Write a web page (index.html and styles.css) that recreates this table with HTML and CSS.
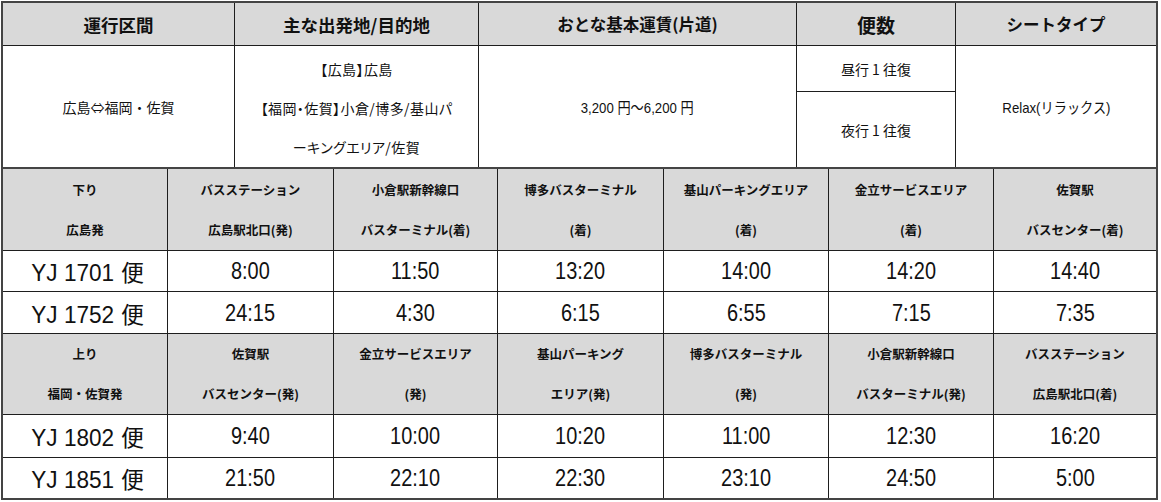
FILE: index.html
```html
<!DOCTYPE html>
<html lang="ja">
<head>
<meta charset="utf-8">
<title>広島⇔福岡・佐賀 運行情報</title>
<link rel="stylesheet" href="styles.css">
</head>
<body>
<div class="page">
  <table class="summary">
    <colgroup>
      <col class="c1"><col class="c2"><col class="c3"><col class="c4"><col class="c5">
    </colgroup>
    <tr class="head">
      <th>運行区間</th>
      <th>主な出発地/目的地</th>
      <th class="narrow">おとな基本運賃(片道)</th>
      <th class="big">便数</th>
      <th class="narrow">シートタイプ</th>
    </tr>
    <tr class="r2a">
      <td rowspan="2" class="desc">広島⇔福岡・佐賀</td>
      <td rowspan="2" class="desc multi">【広島】広島<br>【福岡・佐賀】小倉/博多/基山パ<br>ーキングエリア/佐賀</td>
      <td rowspan="2" class="desc cond"><span class="sq">3,200 円～6,200 円</span></td>
      <td class="desc">昼行 1 往復</td>
      <td rowspan="2" class="desc cond"><span class="sq">Relax(リラックス)</span></td>
    </tr>
    <tr class="r2b">
      <td class="desc night">夜行 1 往復</td>
    </tr>
  </table>

  <table class="timetable">
    <colgroup>
      <col class="t1"><col class="t2"><col class="t3"><col class="t4"><col class="t5"><col class="t6"><col class="t7">
    </colgroup>
    <tr class="sub sub1">
      <th>下り<br>広島発</th>
      <th>バスステーション<br>広島駅北口(発)</th>
      <th>小倉駅新幹線口<br>バスターミナル(着)</th>
      <th>博多バスターミナル<br>(着)</th>
      <th>基山パーキングエリア<br>(着)</th>
      <th>金立サービスエリア<br>(着)</th>
      <th>佐賀駅<br>バスセンター(着)</th>
    </tr>
    <tr class="row ra">
      <td class="bin"><span class="yj">YJ 1701</span> <span class="kanji">便</span></td>
      <td><span class="n">8:00</span></td><td><span class="n">11:50</span></td><td><span class="n">13:20</span></td><td><span class="n">14:00</span></td><td><span class="n">14:20</span></td><td><span class="n">14:40</span></td>
    </tr>
    <tr class="row rb">
      <td class="bin"><span class="yj">YJ 1752</span> <span class="kanji">便</span></td>
      <td><span class="n">24:15</span></td><td><span class="n">4:30</span></td><td><span class="n">6:15</span></td><td><span class="n">6:55</span></td><td><span class="n">7:15</span></td><td><span class="n">7:35</span></td>
    </tr>
    <tr class="sub sub2">
      <th>上り<br>福岡・佐賀発</th>
      <th>佐賀駅<br>バスセンター(発)</th>
      <th>金立サービスエリア<br>(発)</th>
      <th>基山パーキング<br>エリア(発)</th>
      <th>博多バスターミナル<br>(発)</th>
      <th>小倉駅新幹線口<br>バスターミナル(発)</th>
      <th>バスステーション<br>広島駅北口(着)</th>
    </tr>
    <tr class="row rc">
      <td class="bin"><span class="yj">YJ 1802</span> <span class="kanji">便</span></td>
      <td><span class="n">9:40</span></td><td><span class="n">10:00</span></td><td><span class="n">10:20</span></td><td><span class="n">11:00</span></td><td><span class="n">12:30</span></td><td><span class="n">16:20</span></td>
    </tr>
    <tr class="row rd">
      <td class="bin"><span class="yj">YJ 1851</span> <span class="kanji">便</span></td>
      <td><span class="n">21:50</span></td><td><span class="n">22:10</span></td><td><span class="n">22:30</span></td><td><span class="n">23:10</span></td><td><span class="n">24:50</span></td><td><span class="n">5:00</span></td>
    </tr>
  </table>
</div>
</body>
</html>
```

FILE: styles.css
```css
* { box-sizing: border-box; }

html, body {
  margin: 0;
  padding: 0;
  background: #ffffff;
}

body {
  font-family: "Noto Sans CJK JP", "Liberation Sans", sans-serif;
  color: #111111;
}

.page {
  padding: 1px 0 0 1px;
  width: 1161px;
}

table {
  border-collapse: separate;
  border-spacing: 0;
  table-layout: fixed;
  width: 1157px;
}

th, td {
  padding: 0;
  text-align: center;
  vertical-align: middle;
  border-right: 1px solid #1e1e1e;
  border-bottom: 1px solid #1e1e1e;
}

tr > :last-child { border-right: none; }

/* ---------- summary table ---------- */
.summary {
  border: 2px solid #444444;
}

.summary .c1 { width: 232px; }
.summary .c2 { width: 244px; }
.summary .c3 { width: 318px; }
.summary .c4 { width: 159px; }
.summary .c5 { width: 200px; }

.summary .head th {
  height: 43px;
  background: #d9d9d9;
  font-size: 17.5px;
  font-weight: 700;
}

.summary .head th.narrow {
  font-size: 16.5px;
}

.summary .head th.big {
  font-size: 19px;
}

.summary .r2a td { height: 46px; }
.summary .r2b td { height: 75px; }

.summary td[rowspan] { border-bottom: none; }
.summary td.night {
  border-bottom: none;
  border-right: 1px solid #1e1e1e;
}

.desc {
  font-size: 14px;
  font-weight: 400;
}

.desc.multi {
  line-height: 39px;
  padding-top: 4px;
  font-feature-settings: "palt";
  letter-spacing: 0.03em;
}

.desc.cond {
  font-family: "Liberation Sans", "Noto Sans CJK JP", sans-serif;
  font-size: 15px;
}

.sq {
  display: inline-block;
  transform: scaleX(0.88);
}

/* ---------- time table ---------- */
.timetable {
  border: 2px solid #444444;
  border-top: none;
}

.timetable .t1 { width: 165px; }
.timetable .t2 { width: 166px; }
.timetable .t3 { width: 164px; }
.timetable .t4 { width: 166px; }
.timetable .t5 { width: 165px; }
.timetable .t6 { width: 165px; }
.timetable .t7 { width: 162px; }

.timetable .sub th {
  background: #d9d9d9;
  font-size: 12.5px;
  font-weight: 700;
  line-height: 40px;
}

.timetable .sub1 th { height: 82px; }
.timetable .sub2 th { height: 80px; }

.timetable .row td {
  font-family: "Liberation Sans", sans-serif;
  font-size: 24px;
  font-weight: 400;
  color: #111111;
}

.n {
  display: inline-block;
  transform: scaleX(0.83);
}

.yj {
  display: inline-block;
  transform: scaleX(0.94);
  transform-origin: right center;
}

.timetable .ra td { height: 41px; }
.timetable .rb td { height: 42px; }
.timetable .rc td { height: 43px; }
.timetable .rd td { height: 40px; border-bottom: none; }

.timetable .bin .kanji {
  font-family: "Noto Sans CJK JP", sans-serif;
  font-size: 23px;
}
```
